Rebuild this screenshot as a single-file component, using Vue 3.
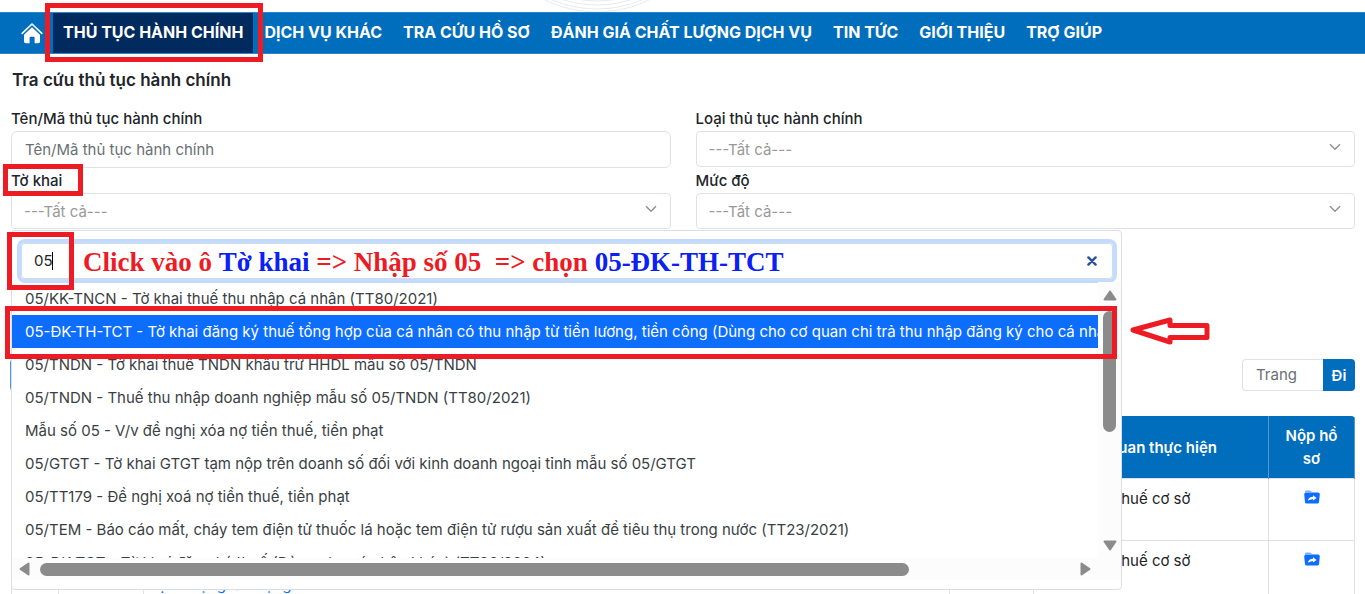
<script setup>
import { ref } from 'vue'

const menu = [
  'DỊCH VỤ KHÁC',
  'TRA CỨU HỒ SƠ',
  'ĐÁNH GIÁ CHẤT LƯỢNG DỊCH VỤ',
  'TIN TỨC',
  'GIỚI THIỆU',
  'TRỢ GIÚP',
]

const options = [
  '05/KK-TNCN - Tờ khai thuế thu nhập cá nhân (TT80/2021)',
  '05-ĐK-TH-TCT - Tờ khai đăng ký thuế tổng hợp của cá nhân có thu nhập từ tiền lương, tiền công (Dùng cho cơ quan chi trả thu nhập đăng ký cho cá nhân)',
  '05/TNDN - Tờ khai thuế TNDN khấu trừ HHDL mẫu số 05/TNDN',
  '05/TNDN - Thuế thu nhập doanh nghiệp mẫu số 05/TNDN (TT80/2021)',
  'Mẫu số 05 - V/v đề nghị xóa nợ tiền thuế, tiền phạt',
  '05/GTGT - Tờ khai GTGT tạm nộp trên doanh số đối với kinh doanh ngoại tỉnh mẫu số 05/GTGT',
  '05/TT179 - Đề nghị xoá nợ tiền thuế, tiền phạt',
  '05/TEM - Báo cáo mất, cháy tem điện tử thuốc lá hoặc tem điện tử rượu sản xuất để tiêu thụ trong nước (TT23/2021)',
  '05-ĐK-TCT - Tờ khai đăng ký thuế (Dùng cho cá nhân khác) (TT86/2024)',
]

const rows = [
  { title: '', office: 'Thuế cơ sở' },
  { title: 'vị sử dụng lao động', office: 'Thuế cơ sở' },
]

const selected = ref(1)
const keyword = ref('05')
const name = ref('')
const page = ref('')
</script>

<template>
  <div class="page">
    <header class="banner">
      <svg class="drum" viewBox="0 0 120 12" aria-hidden="true">
        <g fill="none" stroke="#e6ebf1" stroke-width="1">
          <circle cx="60" cy="-107" r="119" />
          <circle cx="60" cy="-107" r="116" />
          <circle cx="60" cy="-107" r="112" />
          <circle cx="60" cy="-107" r="108" />
        </g>
      </svg>
    </header>

    <nav class="nav">
      <a class="home" href="#" aria-label="Trang chủ">
        <svg viewBox="0 0 22 22" width="22" height="22">
          <path d="M1.2 11.4 L11 2 L20.8 11.4" fill="none" stroke="#fff" stroke-width="1.6" stroke-linecap="round" stroke-linejoin="round" />
          <path d="M11 5.2 L19 12.8 V19.5 Q19 21.3 17.2 21.3 H13.6 V15.6 Q13.6 14.8 12.8 14.8 H9.4 Q8.6 14.8 8.6 15.6 V21.3 H4.8 Q3 21.3 3 19.5 V12.8 Z" fill="#fff" />
        </svg>
      </a>
      <a class="item active" href="#">THỦ TỤC HÀNH CHÍNH<span class="mark mark-nav"></span></a>
      <a v-for="m in menu" :key="m" class="item" href="#">{{ m }}</a>
    </nav>

    <main class="main">
      <h1>Tra cứu thủ tục hành chính</h1>

      <form class="form" @submit.prevent>
        <div class="field">
          <label for="name">Tên/Mã thủ tục hành chính</label>
          <input id="name" v-model="name" class="control tall" type="text" placeholder="Tên/Mã thủ tục hành chính" />
        </div>
        <div class="field">
          <label for="kind">Loại thủ tục hành chính</label>
          <div class="pick">
            <select id="kind" class="control"><option>---Tất cả---</option></select>
            <svg class="chev" viewBox="0 0 12 8"><path d="M1 1.2 L6 6.2 L11 1.2" /></svg>
          </div>
        </div>
        <div class="field">
          <label for="decl"><span class="tag">Tờ khai<span class="mark mark-label"></span></span></label>
          <div class="pick">
            <select id="decl" class="control"><option>---Tất cả---</option></select>
            <svg class="chev" viewBox="0 0 12 8"><path d="M1 1.2 L6 6.2 L11 1.2" /></svg>
          </div>
        </div>
        <div class="field">
          <label for="level">Mức độ</label>
          <div class="pick">
            <select id="level" class="control"><option>---Tất cả---</option></select>
            <svg class="chev" viewBox="0 0 12 8"><path d="M1 1.2 L6 6.2 L11 1.2" /></svg>
          </div>
        </div>

        <div class="dropdown">
          <div class="search">
            <input v-model="keyword" type="text" aria-label="Tìm tờ khai" />
            <span class="caret"></span>
            <button class="clear" type="button" aria-label="Xóa" @click="keyword = ''">
              <svg viewBox="0 0 10 10" width="10" height="10"><path d="M1.4 1.4 L8.6 8.6 M8.6 1.4 L1.4 8.6" stroke="#2c5296" stroke-width="2.4" stroke-linecap="round" /></svg>
            </button>
            <span class="mark mark-search"></span>
            <p class="note">Click vào ô <b>Tờ khai</b> =&gt; Nhập số 05&nbsp; =&gt; chọn <b>05-ĐK-TH-TCT</b></p>
          </div>
          <div class="body">
            <ul class="list" role="listbox" aria-label="Tờ khai">
              <li
                v-for="(o, i) in options"
                :key="o"
                role="option"
                :aria-selected="i === selected"
                :class="{ on: i === selected }"
                @click="selected = i"
              >{{ o }}</li>
            </ul>
            <div class="vbar" aria-hidden="true">
              <svg viewBox="0 0 14 11"><path d="M7 1.5 L12.5 9.5 H1.5 Z" /></svg>
              <div class="vtrack"><div class="vthumb"></div></div>
              <svg viewBox="0 0 14 11"><path d="M7 9.5 L12.5 1.5 H1.5 Z" /></svg>
            </div>
            <span class="mark mark-row"></span>
            <svg class="arrow" viewBox="0 0 80 28">
              <path d="M3 13 L40 3 V8.5 H77 V20.5 H40 V25 Z" fill="#fff" stroke="#ed1c24" stroke-width="5" stroke-linejoin="round" />
            </svg>
          </div>
          <div class="hbar" aria-hidden="true">
            <svg viewBox="0 0 11 14"><path d="M1.5 7 L9.5 1.5 V12.5 Z" /></svg>
            <div class="htrack"><div class="hthumb"></div></div>
            <svg viewBox="0 0 11 14"><path d="M9.5 7 L1.5 1.5 V12.5 Z" /></svg>
          </div>
        </div>
      </form>

      <div class="pager">
        <span class="pages"></span>
        <div class="goto">
          <input v-model="page" type="text" placeholder="Trang" aria-label="Trang" />
          <button type="button">Đi</button>
        </div>
      </div>

      <div class="grid">
        <table>
          <colgroup>
            <col class="c1" /><col class="c2" /><col /><col class="c4" /><col class="c5" /><col class="c6" />
          </colgroup>
          <thead>
            <tr>
              <th></th><th></th><th></th><th></th><th>Cơ quan thực hiện</th><th>Nộp hồ sơ</th>
            </tr>
          </thead>
          <tbody>
            <tr v-for="(r, i) in rows" :key="i">
              <td></td>
              <td></td>
              <td class="title"><a href="#">{{ r.title }}</a></td>
              <td></td>
              <td>{{ r.office }}</td>
              <td>
                <a href="#" aria-label="Nộp hồ sơ">
                  <svg class="folder" viewBox="0 0 16 14" width="16" height="14">
                    <path d="M1 3.4 V1.8 Q1 .5 2.3 .5 H5.6 Q6.4 .5 7 1.1 L8 2 H13.6 Q15 2 15 3.4 Z" fill="#7db1ff" />
                    <path d="M1.6 3 H14.6 Q16 3 15.8 4.4 L15 12.3 Q14.8 13.6 13.5 13.6 H2.5 Q1.2 13.6 1 12.3 L.2 4.4 Q.1 3 1.6 3 Z" fill="#0d6efd" />
                    <path d="M9 5.2 L12.6 8.1 L9 10.6 V9.2 Q6 8.9 3.8 10.8 Q4.8 7 9 6.8 Z" fill="#fff" />
                  </svg>
                </a>
              </td>
            </tr>
          </tbody>
        </table>
      </div>
    </main>
  </div>
</template>

<style>
body {
  margin: 0;
  background: #fff;
}
</style>

<style scoped>
* {
  box-sizing: border-box;
}
.page {
  height: 100vh;
  overflow: hidden;
  font-family: Inter, "Noto Sans", sans-serif;
  font-size: 15px;
  line-height: 23px;
  color: #212529;
}
input,
select,
button {
  font: inherit;
}
.banner {
  height: 12px;
  padding-left: 537px;
}
.drum {
  display: block;
  width: 120px;
  height: 12px;
}
.nav {
  display: flex;
  gap: 1px;
  height: 42px;
  padding-left: 12px;
  background: #006ebc;
  border-top: 1px solid #2a86c8;
  border-bottom: 1px solid #2a86c8;
}
.home {
  display: flex;
  align-items: center;
  width: 40px;
  padding-left: 9px;
}
.item {
  position: relative;
  padding: 0 10px;
  font-size: 16px;
  font-weight: 700;
  line-height: 38px;
  color: #fff;
  text-decoration: none;
  white-space: nowrap;
}
.active {
  background: #012b5f;
}
.mark {
  position: absolute;
  z-index: 5;
  border: 5px solid #ed1c24;
  pointer-events: none;
}
.mark-nav {
  inset: -10px -10px -9px -8px;
}
.main {
  padding: 15px 10px 0 11px;
}
h1 {
  margin: 0;
  padding-left: 1px;
  font-size: 17px;
  font-weight: 600;
  line-height: 23px;
}
.form {
  position: relative;
  display: grid;
  grid-template-columns: 1fr 1fr;
  column-gap: 25px;
  margin-top: 15px;
}
.field label {
  display: block;
  height: 24px;
  font-weight: 500;
  line-height: 23px;
}
.field {
  height: 62px;
}
.tag {
  position: relative;
}
.mark-label {
  inset: -7px -21px -6px -8px;
}
.control {
  display: block;
  width: 100%;
  height: 36px;
  padding: 0 12px;
  border: 1px solid #dee2e6;
  border-radius: 4px;
  background: #fff;
  color: #999;
  appearance: none;
  outline: none;
}
.tall {
  height: 37px;
  padding: 0 13px;
  border-radius: 6px;
}
input::placeholder {
  color: #6a6f74;
  opacity: 1;
}
.pick {
  position: relative;
}
.chev {
  position: absolute;
  top: 12px;
  right: 14px;
  width: 12px;
  height: 8px;
  fill: none;
  stroke: #8f8f8f;
  stroke-width: 1.4;
}
.dropdown {
  position: absolute;
  z-index: 3;
  top: 123px;
  left: 0;
  right: 233px;
  padding-bottom: 9px;
  border: 1px solid #dbdfe5;
  border-radius: 4px;
  background: #fff;
}
.search {
  position: relative;
  display: flex;
  align-items: center;
  height: 36px;
  margin: 12px 8px 3px 9px;
  border: 1px solid #d5dbe3;
  border-radius: 4px;
  box-shadow: 0 0 0 4px #c2dbfe;
}
.search input {
  flex: 1;
  min-width: 0;
  height: 34px;
  padding: 0 12px 2px;
  border: 0;
  background: none;
  color: #212529;
  outline: none;
}
.caret {
  position: absolute;
  top: 8px;
  left: 30px;
  width: 1px;
  height: 18px;
  background: #000;
}
.clear {
  display: flex;
  margin-right: 15px;
  padding: 0;
  border: 0;
  background: none;
}
.mark-search {
  top: -12px;
  left: -15px;
  width: 67px;
  height: 58px;
}
.note {
  position: absolute;
  top: 1px;
  left: 61px;
  margin: 0;
  font-family: "Liberation Serif", "Times New Roman", serif;
  font-size: 27px;
  font-weight: 700;
  line-height: 34px;
  color: #ed1c24;
  white-space: nowrap;
}
.note b {
  color: #0a20f5;
}
.body {
  position: relative;
  display: flex;
  height: 276px;
}
.list {
  flex: 1;
  min-width: 0;
  margin: 0;
  padding: 0;
  overflow: hidden;
  list-style: none;
}
.list li {
  height: 33px;
  padding: 0 13px;
  line-height: 33px;
  color: #3a3f44;
  white-space: nowrap;
}
.list .on {
  background: #0d6efd;
  color: #fff;
}
.vbar {
  display: flex;
  flex-direction: column;
  align-items: center;
  width: 23px;
  padding: 8px 0 7px;
  background: #fcfcfc;
}
.vbar svg {
  width: 14px;
  height: 11px;
}
.vtrack {
  flex: 1;
  width: 13px;
  padding-top: 10px;
}
.vthumb {
  height: 121px;
  border-radius: 7px;
  background: #8b8b8b;
}
.vbar path,
.hbar path {
  fill: #8b8b8b;
  stroke: #8b8b8b;
  stroke-width: 2;
  stroke-linejoin: round;
}
.hbar {
  display: flex;
  align-items: center;
  height: 22px;
  padding: 0 30px 0 7px;
  background: #fcfcfc;
}
.hbar svg {
  width: 11px;
  height: 14px;
}
.htrack {
  flex: 1;
  padding: 0 6px 0 10px;
}
.hthumb {
  width: 84%;
  height: 13px;
  border-radius: 7px;
  background: #8b8b8b;
}
.mark-row {
  top: 24px;
  left: -7px;
  right: 4px;
  height: 53px;
}
.arrow {
  position: absolute;
  top: 35px;
  right: -89px;
  width: 80px;
  height: 28px;
}
.pager {
  display: flex;
  justify-content: space-between;
  margin: 128px 0 25px -1px;
}
.pages {
  width: 60px;
  height: 32px;
  border: 2px solid #4b9ad3;
  border-radius: 4px;
}
.goto {
  display: flex;
  width: 113px;
}
.goto input {
  flex: 1;
  min-width: 0;
  height: 32px;
  padding: 0 13px 1px;
  border: 1px solid #dee2e6;
  border-right: 0;
  border-radius: 4px 0 0 4px;
  outline: none;
}
.goto button {
  width: 32px;
  padding: 0;
  border: 0;
  border-radius: 0 4px 4px 0;
  background: #006ebc;
  color: #fff;
  font-weight: 600;
}
.grid {
  overflow: hidden;
  border-radius: 4px 4px 0 0;
}
table {
  width: 100%;
  table-layout: fixed;
  border-collapse: collapse;
}
.c1 { width: 47px; }
.c2 { width: 85px; }
.c4 { width: 84px; }
.c5 { width: 235px; }
.c6 { width: 86px; }
th {
  padding: 8px 12px;
  background: #006ebc;
  border-right: 1px solid #5b97cf;
  color: #fff;
  font-weight: 600;
}
td {
  height: 62px;
  padding: 8px;
  border: 1px solid #dee2e6;
  text-align: center;
  vertical-align: top;
}
.title {
  padding: 32px 8px 4px;
  text-align: left;
}
.title a {
  color: #0d6efd;
  text-decoration: none;
}
.folder {
  vertical-align: baseline;
}
</style>
